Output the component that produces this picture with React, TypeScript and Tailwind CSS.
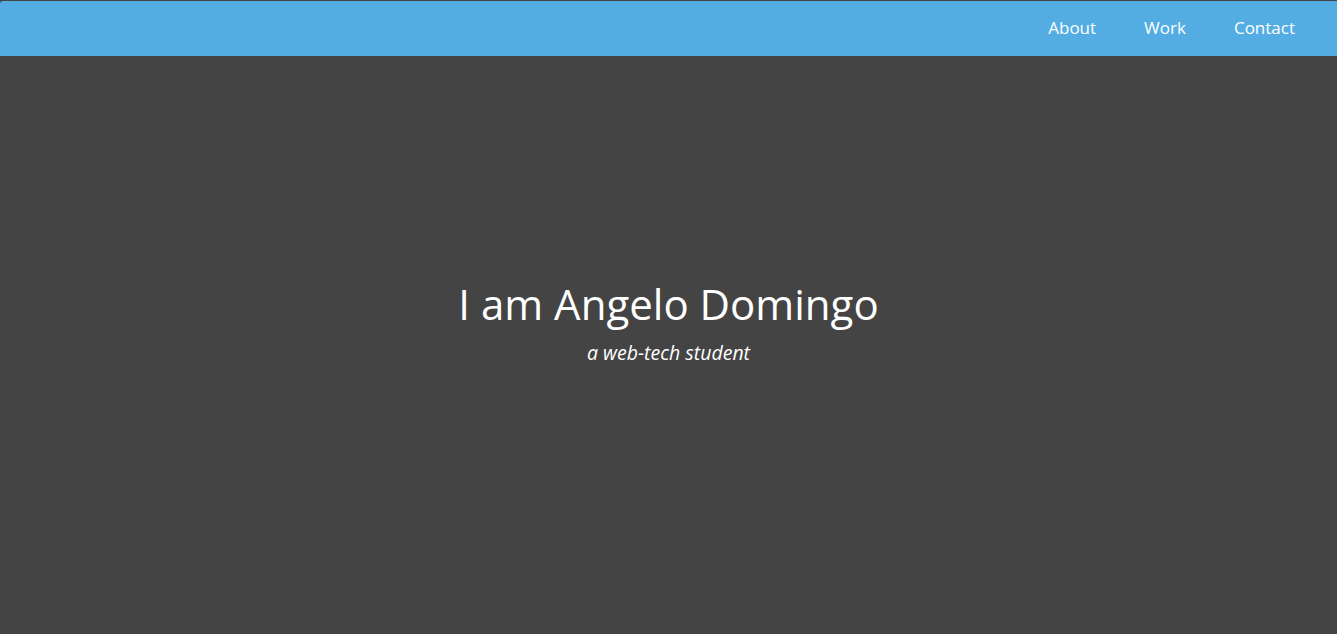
export default function App() {
  return (
    <div className="min-h-screen bg-[#444444] pt-px font-['Open_Sans',sans-serif]">
      <header className="flex h-[55px] items-center justify-end rounded-tl-[3px] bg-[#53ade3] pr-[42px]">
        <nav className="-mt-0.5 flex items-center gap-12 text-[17px] text-white">
          <a href="#about">About</a>
          <a href="#work">Work</a>
          <a href="#contact">Contact</a>
        </nav>
      </header>
      <main className="flex flex-col items-center pt-[222px] text-white">
        <h1 className="text-[42px] leading-[52px] font-medium">I am Angelo Domingo</h1>
        <p className="mt-[8px] text-[19.5px] italic">a web-tech student</p>
      </main>
    </div>
  );
}
